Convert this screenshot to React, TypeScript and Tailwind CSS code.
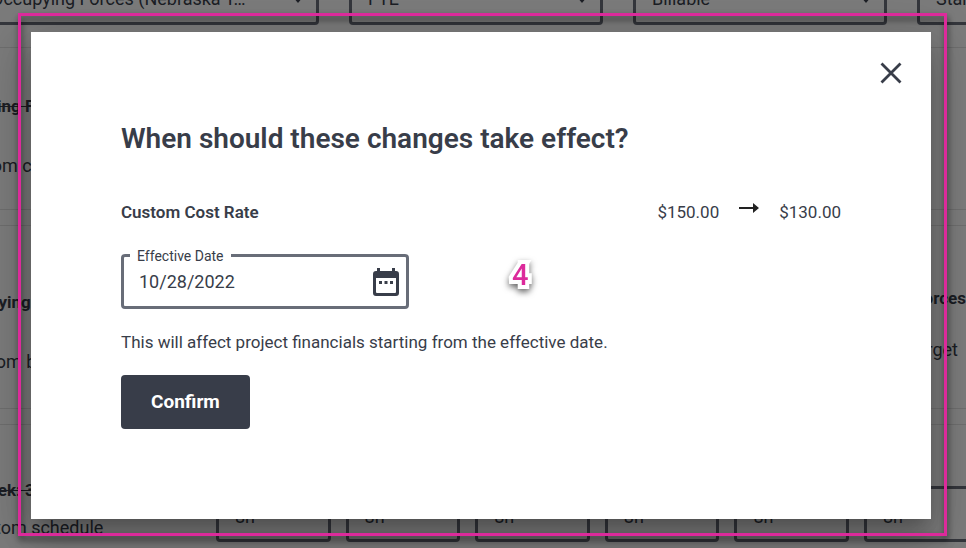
import React from 'react';

function PageSelect({ label, value, className }: { label: string; value: string; className: string }) {
  return (
    <div className={`relative h-14 shrink-0 ${className}`}>
      <select
        aria-label={label}
        className="h-14 w-full appearance-none rounded border-3 border-[#686d78] bg-transparent px-4 pt-1 text-[18px] text-[#383d49]"
      >
        <option>{value}</option>
      </select>
      <svg viewBox="0 0 10 6" className="pointer-events-none absolute right-4 top-7 h-[6px] w-[10px] fill-[#383d49]">
        <path d="M0 0h10L5 6z" />
      </svg>
    </div>
  );
}

function HoursInput({ day }: { day: string }) {
  return (
    <input
      aria-label={`${day} hours`}
      defaultValue="8h"
      className="h-14 w-full min-w-0 rounded border-3 border-[#686d78] bg-transparent px-4 pt-1 text-[18px] text-[#383d49]"
    />
  );
}

function SchedulePage() {
  return (
    <div aria-hidden="true" className="h-full overflow-hidden whitespace-nowrap bg-[#f7f7f7] text-[18px] leading-6 text-[#383d49]">
      <div className="-ml-7 -mt-[31px] w-[1300px]">
        <div className="flex gap-[30px] pb-[22px]">
          <PageSelect label="Project" value="Occupying Forces (Nebraska T…" className="w-[347px]" />
          <PageSelect label="Unit" value="FTE" className="w-[254px]" />
          <PageSelect label="Billing" value="Billable" className="w-[254px]" />
          <PageSelect label="Rate" value="Standard" className="w-[254px]" />
        </div>
        <div className="flex flex-col gap-[15px]">
          <section className="h-[163px] border-y border-[#dcdcdc] pt-[46px]">
            <p className="ml-[-32px] text-[17px] font-bold line-through">Occupying Forces</p>
            <p className="ml-[-17px] mt-9">Custom cost rate</p>
          </section>
          <section className="flex h-[184px] justify-between border-y border-[#dcdcdc] pr-[306px] pt-[60px]">
            <div className="pt-1">
              <p className="ml-[-22px] text-[17px] font-bold">Occupying</p>
              <p className="ml-[-13px] mt-9">Custom budget</p>
            </div>
            <div className="text-right">
              <p className="text-[17px] font-bold">Occupying Forces</p>
              <p className="mr-2 mt-7">Budget target</p>
            </div>
          </section>
          <section className="flex h-[184px] border-t border-[#dcdcdc] pt-[53px]">
            <div className="w-[244px] shrink-0">
              <p className="ml-[2px] text-[17px] font-bold line-through">Week: 38h</p>
              <p className="ml-[-8px] mt-[14px]">Custom schedule</p>
            </div>
            <div className="mt-2 flex gap-[15px]">
              <div className="grid w-[633px] grid-cols-5 gap-[15px]">
                <HoursInput day="Monday" />
                <HoursInput day="Tuesday" />
                <HoursInput day="Wednesday" />
                <HoursInput day="Thursday" />
                <HoursInput day="Friday" />
              </div>
              <div className="w-40">
                <HoursInput day="Total" />
              </div>
            </div>
          </section>
        </div>
      </div>
    </div>
  );
}

function CalendarIcon() {
  return (
    <svg viewBox="0 0 26 28" className="h-7 w-[26px]" aria-hidden="true">
      <path fill="#383d49" fillRule="evenodd" d="M4 0h3v3h12V0h3v3h1a3 3 0 0 1 3 3v19a3 3 0 0 1-3 3H3a3 3 0 0 1-3-3V6a3 3 0 0 1 3-3h1zM3 10v14q0 1 1 1h18q1 0 1-1V10z" />
      <path fill="#383d49" d="M6 13h3v3H6zM11.5 13h3v3h-3zM17 13h3v3h-3z" />
    </svg>
  );
}

function EffectiveDateDialog() {
  return (
    <div
      role="dialog"
      aria-modal="true"
      aria-labelledby="dialog-title"
      className="relative w-full max-w-[900px] bg-white p-[90px] text-[#383d49] shadow-[0_11px_15px_-7px_rgba(0,0,0,0.2),0_24px_38px_3px_rgba(0,0,0,0.14),0_9px_46px_8px_rgba(0,0,0,0.12)]"
    >
      <button type="button" aria-label="Close" className="absolute right-7 top-[29px] flex h-6 w-6 items-center justify-center">
        <svg viewBox="0 0 24 24" className="h-6 w-6" fill="none" stroke="#383d49" strokeWidth="2.8" aria-hidden="true">
          <path d="M2.5 2.5 21.5 21.5M21.5 2.5 2.5 21.5" />
        </svg>
      </button>
      <h1 id="dialog-title" className="text-[28px] font-semibold leading-[34px]">When should these changes take effect?</h1>
      <div className="mt-11 flex items-center justify-between leading-6">
        <h2 className="text-[17px] font-semibold">Custom Cost Rate</h2>
        <div className="flex items-center gap-5 text-[17px]">
          <span>$150.00</span>
          <svg viewBox="0 0 20 12" className="mb-2 h-3 w-5" aria-label="changes to">
            <path fill="#222" d="M0 5h14V1l6 5-6 5V7H0z" />
          </svg>
          <span>$130.00</span>
        </div>
      </div>
      <div className="relative mt-[30px] flex h-[55px] w-72 items-center rounded border-3 border-[#686d78] pl-[15px] pr-[7px]">
        <label htmlFor="effective-date" className="absolute -top-[11px] left-[6px] bg-white px-[7px] text-[14px] leading-5">
          Effective Date
        </label>
        <input id="effective-date" type="text" defaultValue="10/28/2022" className="min-w-0 flex-1 bg-transparent text-[18px] leading-6 outline-none" />
        <button type="button" aria-label="Choose date">
          <CalendarIcon />
        </button>
      </div>
      <p className="mt-[21px] text-[17px] leading-6">This will affect project financials starting from the effective date.</p>
      <button type="button" className="mt-[21px] h-[54px] rounded bg-[#383d49] px-[30px] text-[19px] font-bold text-white">
        Confirm
      </button>
    </div>
  );
}

export default function App() {
  return (
    <div className="relative h-screen overflow-hidden font-['Roboto',sans-serif]">
      <SchedulePage />
      <div className="absolute inset-0 flex items-start justify-center bg-black/50 pl-[31px] pr-[35px] pt-8">
        <EffectiveDateDialog />
      </div>
      <div className="pointer-events-none absolute bottom-3 left-[18px] right-[19px] top-[13px] border-3 border-[#dc2a9b] drop-shadow-[1px_4px_3px_rgba(0,0,0,0.6)]" />
      <span className="pointer-events-none absolute left-[512px] top-[259px] text-[29px] font-medium leading-8 text-[#dc2a9b] drop-shadow-[0_3px_3px_rgba(0,0,0,0.6)] [-webkit-text-stroke:8px_white] [paint-order:stroke_fill] [stroke-linejoin:round]">
        4
      </span>
    </div>
  );
}
